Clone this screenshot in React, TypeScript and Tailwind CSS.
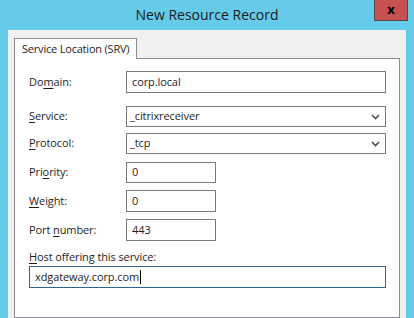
import React from 'react';

const font = { fontFamily: '"Open Sans", "Noto Sans", sans-serif' };

const Chevron: React.FC = () => (
  <svg width="9" height="6" viewBox="0 0 9 6" className="text-[#4d4d4d]">
    <path d="M1 1 L4.5 4.5 L8 1" fill="none" stroke="currentColor" strokeWidth="1.6" />
  </svg>
);

const Label: React.FC<{ pre: string; key_: string; post: string }> = ({ pre, key_, post }) => (
  <span className="w-[97px] shrink-0 text-[11px] tracking-[-0.1px] text-[#1e1e1e]">
    {pre}
    <span className="underline underline-offset-2">{key_}</span>
    {post}
  </span>
);

const TextBox: React.FC<{ value: string; width: string; h: string }> = ({ value, width, h }) => (
  <div className={`${width} ${h} border border-[#7a7a7a] bg-white flex items-center px-[5px] text-[11px] tracking-[-0.1px] text-[#1e1e1e]`}>
    {value}
  </div>
);

const Select: React.FC<{ value: string }> = ({ value }) => (
  <div className="flex-1 h-[21px] border border-[#7a7a7a] bg-white flex items-center justify-between pl-[3px] pr-[5px] text-[11px] tracking-[-0.1px] text-[#1e1e1e]">
    <span>{value}</span>
    <Chevron />
  </div>
);

export default function App() {
  return (
    <div className="w-[414px] h-[318px] overflow-hidden bg-[#66cbe9] flex flex-col" style={font}>
      {/* title bar */}
      <div className="relative h-[30px] shrink-0 flex items-center justify-center">
        <span className="text-[14px] text-[#1a1a1a] pb-[2px]">New Resource Record</span>
        <div className="absolute top-0 left-[374px] w-[34px] h-[21px] bg-[#c75050] border border-t-0 border-[#5b4545] flex items-center justify-center">
          <span className="text-[13px] font-bold text-black leading-none pb-[2px]">x</span>
        </div>
      </div>

      {/* client area */}
      <div className="flex-1 mx-[8px] bg-[#f0f0f0] pl-[6px] pr-[6px] pt-[8px] flex flex-col">
        <div className="w-[123px] h-[21px] bg-white border border-b-0 border-[#898c95] flex items-center pl-[7px] text-[11px] tracking-[-0.2px] text-[#1e1e1e] -mb-px relative z-10">
          Service Location (SRV)
        </div>
        <div className="flex-1 bg-white border border-[#898c95] pl-[14px] pr-[13px] pt-[12px] flex flex-col">
          <div className="flex items-center">
            <Label pre="Do" key_="m" post="ain:" />
            <TextBox value="corp.local" width="flex-1" h="h-[22px]" />
          </div>
          <div className="flex items-center mt-[13px]">
            <Label pre="" key_="S" post="ervice:" />
            <Select value="_citrixreceiver" />
          </div>
          <div className="flex items-center mt-[6px]">
            <Label pre="" key_="P" post="rotocol:" />
            <Select value="_tcp" />
          </div>
          <div className="flex items-center mt-[8px]">
            <Label pre="Pri" key_="o" post="rity:" />
            <TextBox value="0" width="w-[90px]" h="h-[21px]" />
          </div>
          <div className="flex items-center mt-[7px]">
            <Label pre="" key_="W" post="eight:" />
            <TextBox value="0" width="w-[90px]" h="h-[22px]" />
          </div>
          <div className="flex items-center mt-[7px]">
            <Label pre="Port " key_="n" post="umber:" />
            <TextBox value="443" width="w-[90px]" h="h-[22px]" />
          </div>
          <div className="mt-[8px] h-[16px] flex items-center text-[11px] tracking-[-0.1px] text-[#1e1e1e]">
            <span className="underline underline-offset-2">H</span>ost offering this service:
          </div>
          <div className="mt-[1px] h-[22px] border border-[#2b6496] bg-white flex items-center px-[5px] text-[11px] tracking-[-0.1px] text-[#1e1e1e]">
            xdgateway.corp.com
            <span className="inline-block w-px h-[14px] bg-black ml-[1px]" />
          </div>
        </div>
      </div>
    </div>
  );
}
